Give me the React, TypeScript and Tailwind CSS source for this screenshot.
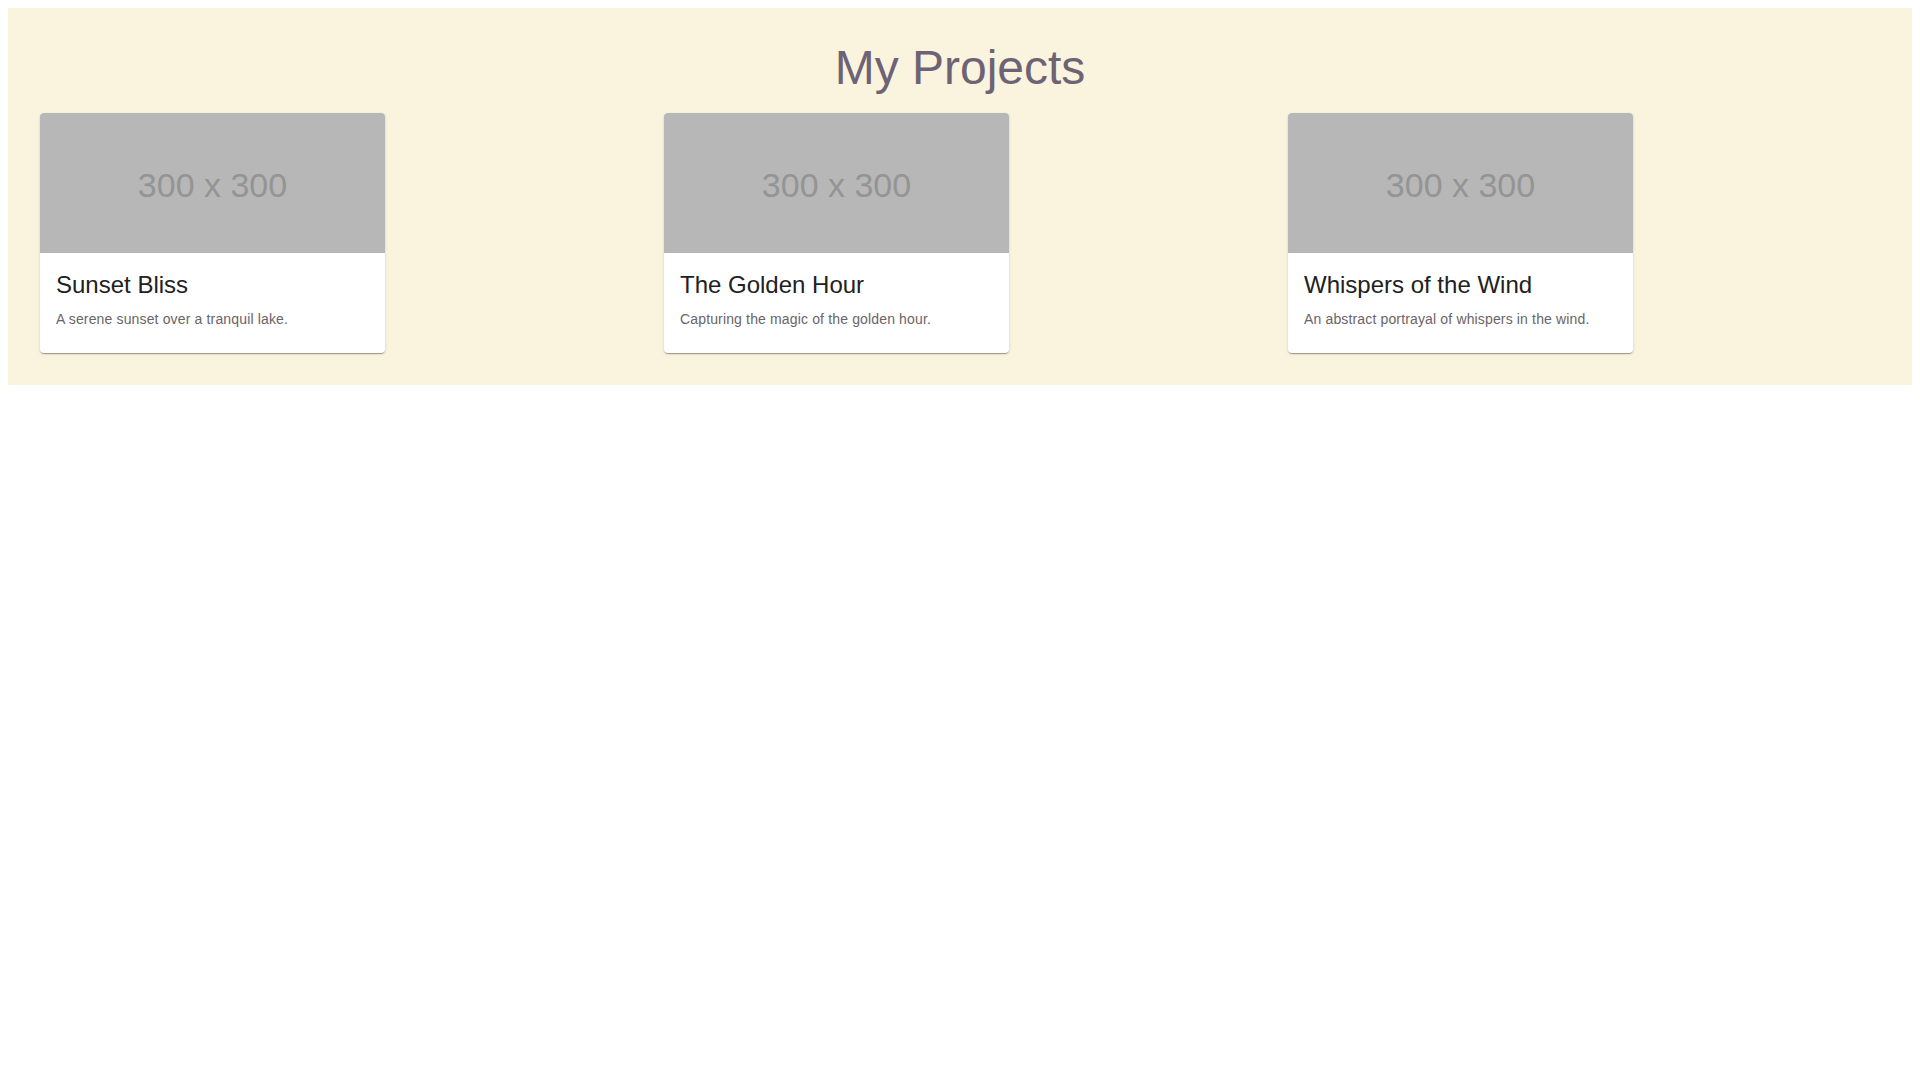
import React from "react";

const projects = [
  { title: "Sunset Bliss", desc: "A serene sunset over a tranquil lake." },
  { title: "The Golden Hour", desc: "Capturing the magic of the golden hour." },
  { title: "Whispers of the Wind", desc: "An abstract portrayal of whispers in the wind." },
];

export default function App() {
  return (
    <div className="bg-white min-h-screen p-2" style={{ fontFamily: '"Liberation Sans", Arial, sans-serif' }}>
      <div className="bg-[#faf3dd] p-8">
        <h3 className="text-center text-[48px] leading-[56px] mb-[16.8px] text-[#6e6275] font-normal">My Projects</h3>
        <div className="grid grid-cols-3 gap-8">
          {projects.map((p) => (
            <div key={p.title}>
              <div className="max-w-[345px] bg-white rounded overflow-hidden shadow-[0px_2px_1px_-1px_rgba(0,0,0,0.2),0px_1px_1px_0px_rgba(0,0,0,0.14),0px_1px_3px_0px_rgba(0,0,0,0.12)]">
                <div className="h-[140px] bg-[#b7b7b7] flex items-center justify-center">
                  <span className="text-[34px] leading-none text-[#949494] mt-[4px]">300 x 300</span>
                </div>
                <div className="p-4 pb-6">
                  <div className="text-[24px] leading-[32px] mb-[8.4px] text-[#212121]">{p.title}</div>
                  <div className="text-[14px] leading-[20px] tracking-[0.01071em] text-[#6a6468]">{p.desc}</div>
                </div>
              </div>
            </div>
          ))}
        </div>
      </div>
    </div>
  );
}
